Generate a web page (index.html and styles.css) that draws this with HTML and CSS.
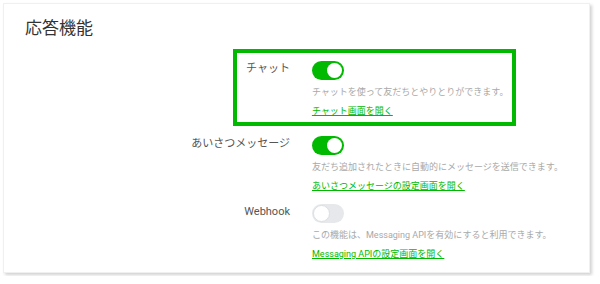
FILE: index.html
```html
<!DOCTYPE html>
<html>
<head>
    <title>応答機能</title>
    <link rel="stylesheet" href="styles.css">
</head>
<body>
    <div class="card">
        <h2 class="title">応答機能</h2>

        <!-- Chat: highlighted row -->
        <div class="row active">
            <div class="label">チャット</div>
            <div class="body">
                <div class="toggle on"><span class="knob"></span></div>
                <div class="desc">チャットを使って友だちとやりとりができます。</div>
                <a class="link" href="#">チャット画面を開く</a>
            </div>
        </div>

        <div class="row">
            <div class="label">あいさつメッセージ</div>
            <div class="body">
                <div class="toggle on"><span class="knob"></span></div>
                <div class="desc">友だち追加されたときに自動的にメッセージを送信できます。</div>
                <a class="link" href="#">あいさつメッセージの設定画面を開く</a>
            </div>
        </div>

        <div class="row">
            <div class="label">Webhook</div>
            <div class="body">
                <div class="toggle off"><span class="knob"></span></div>
                <div class="desc">この機能は、Messaging APIを有効にすると利用できます。</div>
                <a class="link" href="#">Messaging APIの設定画面を開く</a>
            </div>
        </div>
    </div>
</body>
</html>
```

FILE: styles.css
```css
/* Page */
body {
    margin: 0;
    background-color: #fff;
    font-family: Roboto, "Noto Sans CJK JP", sans-serif;
}

/* Card */
.card {
    box-sizing: border-box;
    width: 587px;
    height: 270px;
    margin: 3px;
    padding: 12px 21px 0;
    background-color: #fff;
    border: 1px solid #f0f0f0;
    box-shadow: 2px 2px 3px rgba(0, 0, 0, 0.18);
    display: flex;
    flex-direction: column;
    align-items: flex-start;
}

.title {
    margin: 0 0 9px;
    font-size: 17px;
    line-height: 24px;
    font-weight: normal;
    color: #333;
}

/* Setting rows */
.row {
    display: flex;
    margin-left: 165px;
    margin-top: 11px;
    white-space: nowrap;
}

.label {
    width: 100px;
    margin-right: 22px;
    text-align: right;
    font-size: 11px;
    line-height: 16px;
    color: #555;
}

.row.active {
    box-sizing: border-box;
    width: 283px;
    margin-left: 208px;
    margin-top: 0;
    padding: 8px 0 4px 9px;
    border: 4px solid #00b900;
}

.row.active .label {
    width: auto;
}

.row.active + .row {
    margin-top: 10px;
}

.body {
    display: flex;
    flex-direction: column;
    align-items: flex-start;
}

/* Toggle switch */
.toggle {
    position: relative;
    width: 32px;
    height: 19px;
    border-radius: 10px;
    margin-bottom: 5px;
}

.toggle.on {
    background-color: #00b900;
}

.toggle.off {
    background-color: #e6e8eb;
}

.knob {
    position: absolute;
    top: 2px;
    width: 15px;
    height: 15px;
    border-radius: 50%;
    background-color: #fff;
}

.toggle.on .knob {
    right: 2px;
}

.toggle.off .knob {
    left: 1px;
    top: 1px;
    border: 1px solid #dcdfe3;
}

.desc {
    font-size: 9px;
    line-height: 14px;
    color: #a9a9a9;
}

.link {
    margin-top: 5px;
    font-size: 9px;
    line-height: 14px;
    color: #00b900;
    text-decoration: underline;
}
```
